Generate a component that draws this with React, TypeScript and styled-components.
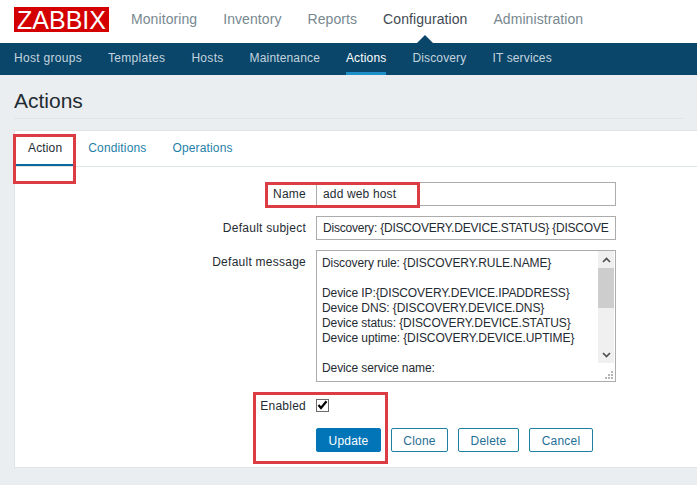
import React from 'react';
import styled, { createGlobalStyle } from 'styled-components';

const GlobalStyle = createGlobalStyle`
  html, body {
    margin: 0;
    padding: 0;
    background-color: #ebeef0;
  }
  body {
    font-family: "Liberation Sans", Arial, sans-serif;
    overflow: hidden;
  }
`;

const Page = styled.div`
  position: relative;
  width: 697px;
  height: 485px;
  overflow: hidden;
  background-color: #ebeef0;
`;

const TopBar = styled.div`
  display: flex;
  align-items: center;
  height: 43px;
  padding: 0 0 5px 14px;
  box-sizing: border-box;
  background-color: #fff;
`;

const Logo = styled.div`
  width: 95px;
  height: 25px;
  margin-right: 9px;
  background-color: #d40000;
  color: #fff;
  font-size: 25px;
  line-height: 26px;
  text-align: center;
`;

const MainLink = styled.a<{ $active?: boolean }>`
  position: relative;
  padding: 0 13px;
  font-size: 14px;
  line-height: 38px;
  letter-spacing: 0.08px;
  color: ${(p) => (p.$active ? '#3f4a52' : '#78888f')};

  ${(p) =>
    p.$active &&
    `
    &::after {
      content: '';
      position: absolute;
      left: 50%;
      bottom: -5px;
      margin-left: -8px;
      border-left: 8px solid transparent;
      border-right: 8px solid transparent;
      border-bottom: 8px solid #0a466a;
    }
  `}
`;

const SubBar = styled.div`
  display: flex;
  height: 32px;
  padding-left: 1px;
  background-color: #0a466a;
`;

const SubLink = styled.a<{ $active?: boolean; $wide?: boolean }>`
  margin: 0 13px;
  height: 32px;
  box-sizing: border-box;
  font-size: 12px;
  line-height: 31px;
  letter-spacing: ${(p) => (p.$wide ? '0.3px' : '0.15px')};
  color: ${(p) => (p.$active ? '#ffffff' : '#c4d4de')};
  border-bottom: 3px solid ${(p) => (p.$active ? '#1f8fc8' : 'transparent')};
`;

const Heading = styled.div`
  height: 44px;
  box-sizing: border-box;
  margin: 0 14px;
  border-bottom: 1px solid #dfe4e7;
`;

const Title = styled.h1`
  margin: 0;
  padding-top: 13px;
  font-size: 21px;
  line-height: 26px;
  font-weight: normal;
  color: #1f2c33;
`;

const Panel = styled.div`
  height: 338px;
  margin: 11px 0 0 14px;
  box-sizing: border-box;
  background-color: #fff;
  border-top: 1px solid #dfe4e7;
  border-bottom: 1px solid #dfe4e7;
  border-left: 1px solid #dfe4e7;
`;

const Tabs = styled.div`
  display: flex;
  height: 36px;
  box-sizing: border-box;
  border-bottom: 1px solid #dfe4e7;
`;

const Tab = styled.a<{ $active?: boolean }>`
  height: 35px;
  padding: 0 13px;
  box-sizing: border-box;
  font-size: 12px;
  line-height: 34px;
  letter-spacing: 0.15px;
  color: ${(p) => (p.$active ? '#1f2c33' : '#1f7fa8')};
  border-bottom: 2px solid ${(p) => (p.$active ? '#0a6a9e' : 'transparent')};
`;

const Form = styled.div`
  display: flex;
  flex-direction: column;
  padding-top: 15px;
`;

const Row = styled.div<{ $gap?: number; $center?: boolean }>`
  display: flex;
  align-items: ${(p) => (p.$center ? 'center' : 'flex-start')};
  margin-bottom: ${(p) => p.$gap ?? 10}px;
`;

const Label = styled.label<{ $top?: number }>`
  width: 301px;
  padding-right: 10px;
  padding-top: ${(p) => p.$top ?? 0}px;
  box-sizing: border-box;
  flex: none;
  font-size: 12px;
  line-height: 14px;
  text-align: right;
  letter-spacing: 0.25px;
  color: #1f2c33;
`;

const TextField = styled.div<{ $tight?: boolean }>`
  width: 300px;
  height: 24px;
  padding: 0 5px 0 6px;
  box-sizing: border-box;
  overflow: hidden;
  white-space: nowrap;
  background-color: #fff;
  border: 1px solid #acacac;
  font-size: 12px;
  line-height: 22px;
  letter-spacing: ${(p) => (p.$tight ? '-0.2px' : '0.15px')};
  color: #1f2c33;
`;

const TextArea = styled.div`
  position: relative;
  display: flex;
  width: 300px;
  height: 132px;
  box-sizing: border-box;
  background-color: #fff;
  border: 1px solid #acacac;
`;

const MessageText = styled.div`
  flex: 1;
  padding: 4.5px 0 0 5px;
  overflow: hidden;
  white-space: pre;
  font-size: 12px;
  line-height: 15px;
  letter-spacing: -0.1px;
  color: #1f2c33;
`;

const ScrollBar = styled.div`
  display: flex;
  flex-direction: column;
  flex: none;
  width: 16px;
  height: 112px;
  margin-right: 1px;
  background-color: #f0f0f0;
`;

const ScrollArrow = styled.div`
  display: flex;
  align-items: center;
  justify-content: center;
  height: 17px;
  flex: none;
`;

const ScrollThumb = styled.div`
  height: 40px;
  background-color: #cdcdcd;
`;

const ScrollTrack = styled.div`
  flex: 1;
`;

const Grip = styled.svg`
  position: absolute;
  right: 1px;
  bottom: 1px;
`;

const Checkbox = styled.div`
  display: flex;
  align-items: center;
  justify-content: center;
  width: 13px;
  height: 13px;
  box-sizing: border-box;
  background-color: #fff;
  border: 1px solid #6a6a6a;
`;

const Buttons = styled.div`
  display: flex;
  gap: 10px;
  padding-left: 301px;
`;

const Button = styled.button<{ $primary?: boolean; $w: number }>`
  width: ${(p) => p.$w}px;
  height: 24px;
  padding: 1px 0 0;
  box-sizing: border-box;
  border-radius: 2px;
  border: 1px solid ${(p) => (p.$primary ? '#0275b8' : '#1f7fa0')};
  background-color: ${(p) => (p.$primary ? '#0275b8' : '#fff')};
  color: ${(p) => (p.$primary ? '#fff' : '#1f6f96')};
  font-family: inherit;
  font-size: 12px;
  letter-spacing: 0.2px;
`;

const Callout = styled.div<{ $x: number; $y: number; $w: number; $h: number }>`
  position: absolute;
  left: ${(p) => p.$x}px;
  top: ${(p) => p.$y}px;
  width: ${(p) => p.$w}px;
  height: ${(p) => p.$h}px;
  box-sizing: border-box;
  border: 3px solid #dc3d45;
`;

const message = `Discovery rule: {DISCOVERY.RULE.NAME}

Device IP:{DISCOVERY.DEVICE.IPADDRESS}
Device DNS: {DISCOVERY.DEVICE.DNS}
Device status: {DISCOVERY.DEVICE.STATUS}
Device uptime: {DISCOVERY.DEVICE.UPTIME}

Device service name:`;

const App = () => {
  return (
    <Page>
      <GlobalStyle />
      <TopBar>
        <Logo>ZABBIX</Logo>
        <MainLink>Monitoring</MainLink>
        <MainLink>Inventory</MainLink>
        <MainLink>Reports</MainLink>
        <MainLink $active>Configuration</MainLink>
        <MainLink>Administration</MainLink>
      </TopBar>
      <SubBar>
        <SubLink $wide>Host groups</SubLink>
        <SubLink $wide>Templates</SubLink>
        <SubLink $wide>Hosts</SubLink>
        <SubLink>Maintenance</SubLink>
        <SubLink $active>Actions</SubLink>
        <SubLink>Discovery</SubLink>
        <SubLink>IT services</SubLink>
      </SubBar>
      <Heading>
        <Title>Actions</Title>
      </Heading>
      <Panel>
        <Tabs>
          <Tab $active>Action</Tab>
          <Tab>Conditions</Tab>
          <Tab>Operations</Tab>
        </Tabs>
        <Form>
          <Row>
            <Label $top={5}>Name</Label>
            <TextField>add web host</TextField>
          </Row>
          <Row>
            <Label $top={5}>Default subject</Label>
            <TextField $tight>Discovery: {'{DISCOVERY.DEVICE.STATUS}'} {'{DISCOVE'}</TextField>
          </Row>
          <Row $gap={16}>
            <Label $top={5}>Default message</Label>
            <TextArea>
              <MessageText>{message}</MessageText>
              <ScrollBar>
                <ScrollArrow>
                  <svg width="9" height="6" viewBox="0 0 9 6">
                    <path d="M1 5 L4.5 1.5 L8 5" fill="none" stroke="#505050" strokeWidth="1.7" />
                  </svg>
                </ScrollArrow>
                <ScrollThumb />
                <ScrollTrack />
                <ScrollArrow>
                  <svg width="9" height="6" viewBox="0 0 9 6">
                    <path d="M1 1 L4.5 4.5 L8 1" fill="none" stroke="#505050" strokeWidth="1.7" />
                  </svg>
                </ScrollArrow>
              </ScrollBar>
              <Grip width="10" height="10" viewBox="0 0 10 10">
                <path d="M7 1h2v2h-2zM4 4h2v2h-2zM7 4h2v2h-2zM1 7h2v2h-2zM4 7h2v2h-2zM7 7h2v2h-2z" fill="#b5b5b5" />
              </Grip>
            </TextArea>
          </Row>
          <Row $gap={15} $center>
            <Label $top={1}>Enabled</Label>
            <Checkbox>
              <svg width="11" height="11" viewBox="0 0 11 11">
                <path d="M1.5 5 L4 8 L9.5 1.2" fill="none" stroke="#000" strokeWidth="2.2" />
              </svg>
            </Checkbox>
          </Row>
          <Buttons>
            <Button $primary $w={65}>Update</Button>
            <Button $w={57}>Clone</Button>
            <Button $w={61}>Delete</Button>
            <Button $w={64}>Cancel</Button>
          </Buttons>
        </Form>
      </Panel>
      <Callout $x={13} $y={134} $w={63} $h={50} />
      <Callout $x={265} $y={182} $w={155} $h={26} />
      <Callout $x={253} $y={392} $w={135} $h={72} />
    </Page>
  );
};

export default App;
